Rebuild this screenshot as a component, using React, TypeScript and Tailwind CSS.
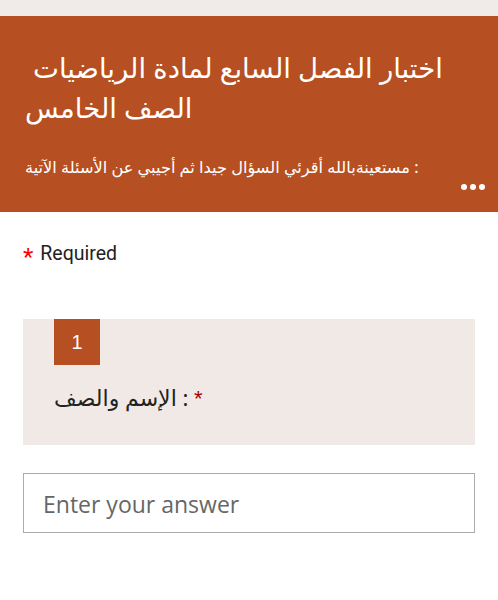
import React from "react";

export default function App() {
  const arabic = { fontFamily: '"Noto Sans", "DejaVu Sans", sans-serif' };
  return (
    <div className="w-[498px] h-[600px] bg-white overflow-hidden">
      <div className="h-[16px] bg-[#f0ebe9]" />
      <div className="h-[196px] bg-[#b64f21] relative px-[25px] pt-[32px]" style={arabic}>
        <div className="text-white text-[27.5px] leading-[40px]">
          <div className="pl-[8px] whitespace-nowrap">اختبار الفصل السابع لمادة الرياضيات</div>
          <div className="whitespace-nowrap">الصف الخامس</div>
        </div>
        <div className="mt-[28px] text-white text-[16.2px] leading-[22px] whitespace-nowrap">
          مستعينةبالله أقرئي السؤال جيدا ثم أجيبي عن الأسئلة الآتية :
        </div>
        <div className="absolute right-[13px] bottom-[22px] flex gap-[3px]">
          <span className="w-[6px] h-[6px] rounded-full bg-white" />
          <span className="w-[6px] h-[6px] rounded-full bg-white" />
          <span className="w-[6px] h-[6px] rounded-full bg-white" />
        </div>
      </div>
      <div className="px-[23px]">
        <div className="pt-[30px] flex items-center h-[54px]" style={{ fontFamily: 'Roboto, sans-serif' }}>
          <span className="text-[#ff0000] text-[24px] leading-none mt-[6px] mr-[7px]">*</span>
          <span className="text-[#222] text-[19.5px]">Required</span>
        </div>
        <div className="mt-[53px] bg-[#f0e9e6] h-[126px] px-[31px]">
          <div className="w-[46px] h-[46px] bg-[#b64f21] text-white text-[20px] flex items-center justify-center" style={{ fontFamily: '"Liberation Sans", sans-serif' }}>
            1
          </div>
          <div className="mt-[17px] text-[22px] leading-[30px] text-[#222] whitespace-nowrap" style={arabic}>
            الإسم والصف : <span className="text-[#a80000]" style={{ fontFamily: '"Liberation Sans", sans-serif' }}>*</span>
          </div>
        </div>
        <div className="mt-[28px] h-[60px] border border-[#ababab] flex items-center px-[19px]">
          <span className="text-[#666] text-[23px] mt-[2px]" style={{ fontFamily: '"Open Sans", sans-serif' }}>Enter your answer</span>
        </div>
      </div>
    </div>
  );
}
